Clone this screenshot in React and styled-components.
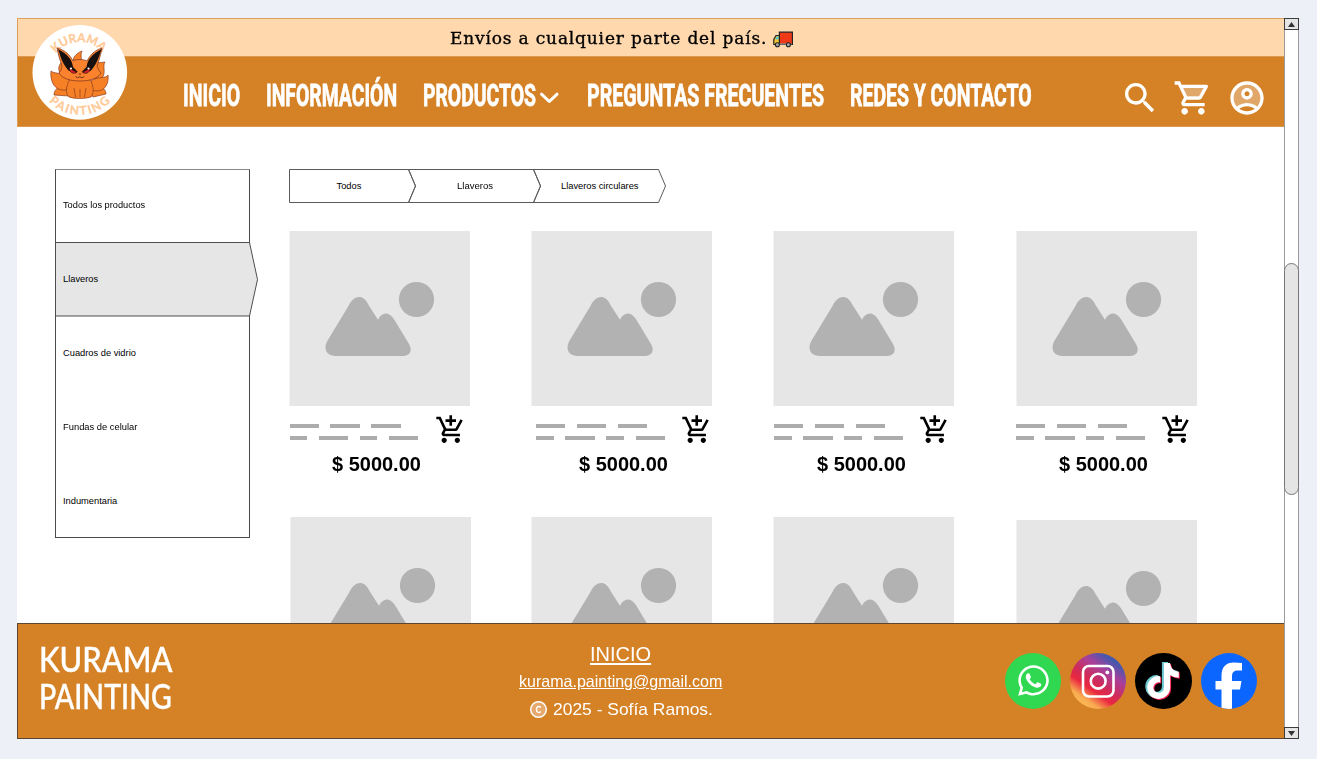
import React, { useLayoutEffect, useRef, useState } from "react";
import styled, { createGlobalStyle } from "styled-components";
import { FaWhatsapp, FaTiktok } from "react-icons/fa";

const GlobalStyle = createGlobalStyle`
  * { box-sizing: border-box; }
  body { margin: 0; background: #edf0f6; font-family: "Liberation Sans", Arial, sans-serif; color: #000; }
`;

const Page = styled.div`
  width: 1317px;
  height: 759px;
  padding: 18px 0 0 17px;
  overflow: hidden;
`;

const Frame = styled.div`
  display: flex;
  width: 1282px;
  height: 721px;
  background: #fff;
`;

const Main = styled.div`
  position: relative;
  display: flex;
  flex-direction: column;
  width: 1266.5px;
  height: 721px;
`;

/* Text stretched horizontally so that it fills a fixed width */
const FitBox = styled.span`
  display: block;
  flex: none;
  width: ${(p) => p.$w}px;
  white-space: nowrap;
`;
const FitInner = styled.span`
  display: inline-block;
  transform-origin: 0 50%;
`;
function Fit({ w, children, className }) {
  const ref = useRef(null);
  const [scale, setScale] = useState(1);
  useLayoutEffect(() => {
    setScale(w / ref.current.offsetWidth);
  }, [w]);
  return (
    <FitBox $w={w} className={className}>
      <FitInner ref={ref} style={{ transform: `scaleX(${scale})` }}>
        {children}
      </FitInner>
    </FitBox>
  );
}

/* ---------- header ---------- */
const Banner = styled.div`
  display: flex;
  align-items: center;
  gap: 5px;
  height: 38px;
  flex: none;
  padding: 3px 0 0 432px;
  background: #ffd8ae;
  border: solid #dda05a;
  border-width: 1px 0 0 1px;
`;
const BannerText = styled(Fit)`
  font: 500 16px/20px "DejaVu Serif", serif;
  letter-spacing: 0.8px;
  -webkit-text-stroke: 0.35px #000;
`;
const NavBar = styled.header`
  display: flex;
  align-items: flex-start;
  height: 71px;
  flex: none;
  padding-left: 165px;
  background: #d58227;
  border: solid #dc9a50;
  border-width: 1px 0 1px 1px;
`;
const Nav = styled.nav`
  display: flex;
  gap: 26px;
  padding-top: 20px;
  width: 937px;
`;
const NavItem = styled.div`
  display: flex;
  align-items: center;
  gap: 3px;
  height: 38px;
  svg { margin-top: 3px; }
`;
const NavText = styled(Fit)`
  font: 700 31.5px/38px Roboto, sans-serif;
  color: #fff;
  -webkit-text-stroke: 0.8px #fff;
`;
const Actions = styled.div`
  display: flex;
  gap: 13.4px;
  padding-top: 21px;
`;
const LogoSlot = styled.div`
  position: absolute;
  left: 13px;
  top: 4px;
  width: 100px;
  height: 100px;
`;

/* ---------- body ---------- */
const Content = styled.div`
  display: flex;
  align-items: flex-start;
  height: 496px;
  flex: none;
  overflow: hidden;
  padding: 42px 0 0 38px;
`;
const Sidebar = styled.ul`
  list-style: none;
  margin: 0 39px 0 0;
  padding: 0;
  width: 195px;
  height: 369px;
  flex: none;
  border: 1px solid #4a4a4a;
  border-top-color: #8a8a8a;
`;
const SideItem = styled.li`
  position: relative;
  display: flex;
  align-items: center;
  height: 73.8px;
  padding: 0 0 3px 7px;
`;
const ActiveShape = styled.svg`
  position: absolute;
  left: -1px;
  top: -1.8px;
  width: 204px;
  height: 76px;
`;
const SideText = styled(Fit)`
  position: relative;
  font-size: 9.3px;
  line-height: 12px;
`;
const Catalog = styled.section`
  width: 960px;
`;
const Crumbs = styled.div`
  display: flex;
  height: 34px;
  margin-bottom: 28px;
`;
const Crumb = styled.div`
  position: relative;
  display: flex;
  align-items: center;
  justify-content: center;
  width: 125px;
  height: 34px;
  flex: none;
  padding-right: ${(p) => p.$pad}px;
`;
const CrumbShape = styled.svg`
  position: absolute;
  left: 0;
  top: 0;
  width: 128px;
  height: 34px;
  overflow: visible;
`;
const CrumbText = styled(Fit)`
  position: relative;
  font-size: 9.3px;
  line-height: 12px;
`;
const Grid = styled.div`
  display: grid;
  grid-template-columns: 242px 242px 242px 181px;
  grid-auto-rows: 286px;
`;
const Card = styled.article`
  padding-top: ${(p) => p.$drop || 0}px;
  padding-left: ${(p) => p.$shift || 0}px;
`;
const Photo = styled.svg`
  display: block;
  width: 181px;
  height: 175px;
`;
const Info = styled.div`
  padding-left: ${(p) => p.$shift || 0}px;
`;
const InfoTop = styled.div`
  display: flex;
  height: 44px;
  padding-top: 8px;
`;
const Lines = styled.div`
  display: flex;
  flex-direction: column;
  gap: 8px;
  width: 145.5px;
  padding: 10px 0 0 0.5px;
`;
const Line = styled.div`
  display: flex;
  gap: 11.6px;
  height: 4px;
`;
const Dash = styled.i`
  width: ${(p) => p.$w}px;
  background: #acacac;
`;
const Price = styled(Fit)`
  margin: 2px 0 0 43px;
  font-weight: 700;
  font-size: 21px;
  line-height: 24px;
`;

/* ---------- footer ---------- */
const Footer = styled.footer`
  display: flex;
  height: 116px;
  flex: none;
  background: #d58227;
  border: 1px solid #5d4630;
  border-right: 0;
  color: #fff;
`;
const Brand = styled.div`
  width: 400px;
  padding: 16px 0 0 21px;
`;
const BrandText = styled(Fit)`
  font: 500 34.5px/38px Lato, sans-serif;
  height: 37px;
  -webkit-text-stroke: 0.4px #fff;
`;
const Contact = styled.div`
  display: flex;
  flex-direction: column;
  align-items: center;
  width: 405px;
  padding-top: 17px;
`;
const FooterText = styled.div`
  font-size: ${(p) => p.$size}px;
  line-height: ${(p) => p.$lh}px;
`;
const Copyright = styled.div`
  display: flex;
  align-items: center;
  gap: 5px;
  padding: 4px 0 0 1px;
`;
const Social = styled.div`
  display: flex;
  gap: 9px;
  padding: 28.5px 0 0 182px;
`;
const SocialIcon = styled.div`
  display: flex;
  align-items: center;
  justify-content: center;
  width: ${(p) => p.$size || 56.5}px;
  height: ${(p) => p.$size || 56.5}px;
  border-radius: 50%;
  overflow: hidden;
  background: ${(p) => p.$bg};
  svg { flex: none; }
`;
const TikTok = styled(FaTiktok)`
  color: #fff;
  filter: drop-shadow(-1.2px -1px 0 #6cc8d0) drop-shadow(1.3px 1px 0 #f0204e);
`;

/* ---------- scrollbar ---------- */
const ScrollTrack = styled.div`
  display: flex;
  flex-direction: column;
  width: 15px;
  height: 721px;
  background: #fff;
  border: solid #9a9a9a;
  border-width: 0 1px;
  flex: none;
`;
const ScrollButton = styled.div`
  display: flex;
  align-items: center;
  justify-content: center;
  width: 15px;
  height: 12px;
  flex: none;
  margin-left: -1px;
  background: #e5e5e5;
  border: 1px solid #3c3c3c;
`;
const Thumb = styled.div`
  width: 15px;
  height: 232px;
  flex: none;
  margin: 233px 0 232px -1px;
  border: 1px solid #777;
  border-radius: 8px;
  background: #e5e5e5;
`;

function Logo() {
  const tail = { fill: "#f58025", stroke: "#8b3b20", strokeWidth: 0.7 };
  return (
    <svg width="100" height="100" viewBox="0 0 100 100">
      <circle cx="49.8" cy="50.4" r="47.3" fill="#fff" />
      <defs>
        <path id="arcTop" d="M 19 50.500 A 30.500 30.500 0 0 1 80 50.500" />
        <path id="arcBottom" d="M 7.500 50.500 A 42.300 42.300 0 0 0 92.100 50.500" />
      </defs>
      <g fill="#ffcb98" stroke="#ffcb98" strokeWidth="0.300" fontFamily="Lato, sans-serif" fontWeight="700" fontSize="12">
        <text textAnchor="middle">
          <textPath href="#arcTop" startOffset="49%">KURAMA</textPath>
        </text>
        <text textAnchor="middle" letterSpacing="1.700">
          <textPath href="#arcBottom" startOffset="50.500%">PAINTING</textPath>
        </text>
      </g>
      <path d="M43 38c1-4 4-7 9-9-2 4 0 6-1 10z" {...tail} />
      <path d="M33 54c-6-4-5-11-1-14l6 12z" {...tail} />
      <path d="M63 43c3-3 7-2 12-3-3 4 2 12-4 17-5 2-9-1-8-5z" {...tail} />
      <path d="M36 62c-6 1-12 5-12 11l15 1 3-6z" {...tail} />
      <path d="M64 62c6 1 12 5 12 10l-13 3-4-6z" {...tail} />
      <path d="M21 49c4 4 16 0 19 9 2 8-3 11-8 10-9-1-12-11-11-19z" {...tail} />
      <path d="M78 53c-2 4-11 1-17 6-4 6 0 10 6 10 9 0 12-9 11-16z" {...tail} />
      <path d="M40 57h20c4 8 4 14 1 18-7 2-16 2-22 0-4-4-3-11 1-18z" {...tail} />
      <path d="M45.500 75l-1.500-9M54.500 75l1.500-9M50 75v-8" fill="none" stroke="#8d3b1c" strokeWidth="0.700" />
      <path d="M32 44c-2-6-4-12-5-18 8 2 13 7 16 13 4-2 10-2 14 0 3-6 8-11 15-13-1 6-3 12-5 18 1 2 1 4 4 7-3 5-10 8-21 8s-18-3-21-8c3-3 2-5 3-7z" fill="#fb832e" stroke="#7a3220" strokeWidth="0.700" />
      <path d="M28 27c9 5 14 10 15 18l5 5-9-1c-5-5-8-12-11-22z" fill="#18100f" />
      <path d="M71.500 27c-9 5-14 10-15 18l-5 5 9-1c5-5 8-12 11-22z" fill="#18100f" />
      <path d="M39 46l8 4.500c-3 1.500-7 1-8-4.500z" fill="#e31f28" stroke="#32100f" strokeWidth="0.700" />
      <path d="M60.500 46l-8 4.500c3 1.500 7 1 8-4.500z" fill="#e31f28" stroke="#32100f" strokeWidth="0.700" />
      <circle cx="41" cy="46.500" r="1.100" fill="#fff" />
      <circle cx="58.500" cy="46.500" r="1.100" fill="#fff" />
      <path d="M48.700 52h2.400M45.500 54.500q2 2.400 4.400.3q2.400 2.100 4.400-.3" fill="none" stroke="#501d16" strokeWidth="0.800" />
    </svg>
  );
}

function Truck() {
  return (
    <svg width="22" height="18" viewBox="0 0 22 18">
      <path d="M1.800 14.500V9.500L4 5.500H8v9z" fill="#f3c62f" stroke="#222" strokeWidth="1.200" />
      <path d="M3.200 9.300L4.800 6.500h1.800v2.800z" fill="#4cc8ec" />
      <path d="M7.400 2.200h13v12.300h-13z" fill="#f03a17" stroke="#222" strokeWidth="1.200" />
      <path d="M3 14h16.500" stroke="#888" strokeWidth="1.400" />
      <circle cx="5.400" cy="14.800" r="2" fill="#aaa" stroke="#222" strokeWidth="1.100" />
      <circle cx="16.400" cy="14.800" r="2" fill="#aaa" stroke="#222" strokeWidth="1.100" />
    </svg>
  );
}

const SearchIcon = () => (
  <svg width="40" height="40" viewBox="0 0 24 24" fill="#fff">
    <path d="M15.5 14h-.79l-.28-.27C15.41 12.59 16 11.11 16 9.5 16 5.91 13.09 3 9.5 3S3 5.91 3 9.5 5.91 16 9.5 16c1.61 0 3.09-.59 4.23-1.57l.27.28v.79l5 4.99L20.49 19l-4.99-5zm-6 0C7.01 14 5 11.99 5 9.5S7.01 5 9.5 5 14 7.01 14 9.5 11.99 14 9.5 14z" />
  </svg>
);
const CartIcon = () => (
  <svg width="40" height="40" viewBox="0 0 24 24" fill="#fff">
    <path d="M15.55 11l2.76-5H6.16l2.37 5z" opacity=".3" />
    <path d="M15.55 13c.75 0 1.41-.41 1.75-1.03l3.58-6.49A.996.996 0 0020.01 4H5.21l-.94-2H1v2h2l3.6 7.59-1.35 2.44C4.52 15.37 5.48 17 7 17h12v-2H7l1.1-2h7.45zM6.16 6h12.15l-2.76 5H8.53L6.16 6zM7 18c-1.1 0-1.99.9-1.99 2S5.9 22 7 22s2-.9 2-2-.9-2-2-2zm10 0c-1.1 0-1.99.9-1.99 2s.89 2 1.99 2 2-.9 2-2-.9-2-2-2z" />
  </svg>
);
const AccountIcon = () => (
  <svg width="40" height="40" viewBox="0 0 24 24" fill="#fff">
    <path opacity=".3" fillRule="evenodd" d="M12 4c-4.420 0-8 3.580-8 8 0 1.950.7 3.730 1.860 5.120C7.550 15.800 9.680 15 12 15s4.450.8 6.140 2.120C19.300 15.730 20 13.950 20 12c0-4.420-3.580-8-8-8zm0 9c-1.930 0-3.500-1.570-3.500-3.500S10.070 6 12 6s3.500 1.570 3.500 3.500S13.930 13 12 13z" />
    <path d="M12 2C6.480 2 2 6.480 2 12s4.480 10 10 10 10-4.480 10-10S17.520 2 12 2zM7.350 18.500C8.660 17.560 10.260 17 12 17s3.340.56 4.650 1.500c-1.310.94-2.910 1.500-4.650 1.500s-3.340-.56-4.650-1.500zm10.790-1.380C16.450 15.800 14.320 15 12 15s-4.450.8-6.140 2.120C4.700 15.730 4 13.950 4 12c0-4.420 3.580-8 8-8s8 3.580 8 8c0 1.950-.7 3.730-1.860 5.120z" />
    <path d="M12 6c-1.930 0-3.500 1.570-3.500 3.500S10.070 13 12 13s3.500-1.570 3.500-3.500S13.930 6 12 6zm0 5c-.83 0-1.500-.67-1.500-1.500S11.170 8 12 8s1.500.67 1.500 1.500S12.830 11 12 11z" />
  </svg>
);
const AddCartIcon = () => (
  <svg width="31.500" height="31.500" viewBox="0 0 24 24">
    <path d="M11 9h2V6h3V4h-3V1h-2v3H8v2h3v3zm-4 9c-1.1 0-1.99.9-1.99 2S5.9 22 7 22s2-.9 2-2-.9-2-2-2zm10 0c-1.1 0-1.99.9-1.99 2s.89 2 1.99 2 2-.9 2-2-.9-2-2-2zm-9.830-3.250l.03-.12.9-1.630h7.450c.75 0 1.410-.41 1.750-1.030l3.860-7.010L19.420 4h-.01l-1.100 2-2.760 5H8.530l-.13-.27L6.160 6l-.95-2-.94-2H1v2h2l3.600 7.590-1.350 2.450c-.16.28-.25.61-.25.96 0 1.100.9 2 2 2h12v-2H7.420c-.13 0-.25-.11-.25-.25z" />
  </svg>
);
const Chevron = () => (
  <svg width="22" height="14" viewBox="0 0 22 14">
    <path d="M2.500 3.200l7.800 7.300 7.800-7.300" fill="none" stroke="#fff" strokeWidth="3" strokeLinecap="round" strokeLinejoin="round" />
  </svg>
);
const InstagramGlyph = () => (
  <svg width="34" height="34" viewBox="0 0 34 34" fill="none" stroke="#fff" strokeWidth="2.600">
    <rect x="2" y="2" width="30.500" height="30.500" rx="6" />
    <circle cx="17.200" cy="17.200" r="7.400" />
    <circle cx="26.300" cy="8.400" r="1.900" fill="#fff" stroke="none" />
  </svg>
);

function Product({ shift, drop, infoShift, photoOnly }) {
  return (
    <Card $shift={shift} $drop={drop}>
      <Photo viewBox="0 0 181 175" fill="#b2b2b2">
        <rect x="0.500" width="180.500" height="175" fill="#e6e6e6" />
        <circle cx="127.500" cy="68.500" r="17.600" />
        <path d="M38.300 110L59.500 75C65 63.500 74.500 63 79.500 74L89 88.700C92.500 81.500 99.500 79.500 105.500 89L120 113C124 120 120.500 125 114 125H46.500C36.500 124.500 34.500 117 38.300 110z" />
      </Photo>
      {!photoOnly && (
        <Info $shift={infoShift}>
          <InfoTop>
            <Lines>
              <Line><Dash $w={29.400} /><Dash $w={29.400} /><Dash $w={29.400} /></Line>
              <Line><Dash $w={17.700} /><Dash $w={29.400} /><Dash $w={17.700} /><Dash $w={29.400} /></Line>
            </Lines>
            <AddCartIcon />
          </InfoTop>
          <Price w={88.500}>$ 5000.00</Price>
        </Info>
      )}
    </Card>
  );
}

const NAV = [
  ["INICIO", 57],
  ["INFORMACIÓN", 131],
  ["PRODUCTOS", 113, true],
  ["PREGUNTAS FRECUENTES", 237],
  ["REDES Y CONTACTO", 182],
];
const CATEGORIES = [
  ["Todos los productos", 82.500],
  ["Llaveros", 35],
  ["Cuadros de vidrio", 73],
  ["Fundas de celular", 74.500],
  ["Indumentaria", 54],
];
const CRUMBS = [
  ["Todos", 25, 5],
  ["Llaveros", 36, 4],
  ["Llaveros circulares", 78, 3],
];
const PRODUCTS = [
  {},
  { infoShift: 4.500 },
  { infoShift: 0.500 },
  { shift: 0.500 },
  { shift: 0.500, photoOnly: true },
  { photoOnly: true },
  { shift: -0.500, photoOnly: true },
  { shift: 1, drop: 3, photoOnly: true },
];

export default function App() {
  return (
    <Page>
      <GlobalStyle />
      <Frame>
        <Main>
          <Banner>
            <BannerText w={317}>Envíos a cualquier parte del país.</BannerText>
            <Truck />
          </Banner>
          <NavBar>
            <Nav>
              {NAV.map(([label, w, menu]) => (
                <NavItem key={label}>
                  <NavText w={w}>{label}</NavText>
                  {menu && <Chevron />}
                </NavItem>
              ))}
            </Nav>
            <Actions>
              <SearchIcon />
              <CartIcon />
              <AccountIcon />
            </Actions>
          </NavBar>
          <LogoSlot><Logo /></LogoSlot>
          <Content>
            <Sidebar>
              {CATEGORIES.map(([label, w], i) => (
                <SideItem key={label}>
                  {i === 1 && (
                    <ActiveShape viewBox="0 0 204 76">
                      <path d="M.5.5H194.500L202.500 37.500L194.500 74H.5z" fill="#e6e6e6" stroke="#4f4f4f" />
                    </ActiveShape>
                  )}
                  <SideText w={w}>{label}</SideText>
                </SideItem>
              ))}
            </Sidebar>
            <Catalog>
              <Crumbs>
                {CRUMBS.map(([label, w, pad], i) => (
                  <Crumb key={label} $pad={pad}>
                    <CrumbShape viewBox="0 0 128 34">
                      <path
                        d={i === 0 ? "M.5.5H119.500L126.500 17L119.500 33.500H.5z" : "M-5.500.5H119.500L126.500 17L119.500 33.500H-5.500L1.500 17z"}
                        fill="none"
                        stroke="#5a5a5a"
                      />
                    </CrumbShape>
                    <CrumbText w={w}>{label}</CrumbText>
                  </Crumb>
                ))}
              </Crumbs>
              <Grid>
                {PRODUCTS.map((p, i) => <Product key={i} {...p} />)}
              </Grid>
            </Catalog>
          </Content>
          <Footer>
            <Brand>
              <BrandText w={133}>KURAMA</BrandText>
              <BrandText w={133}>PAINTING</BrandText>
            </Brand>
            <Contact>
              <FooterText $size={21} $lh={25}><Fit w={61}><u>INICIO</u></Fit></FooterText>
              <FooterText $size={16.500} $lh={30}><Fit w={203}><u>kurama.painting@gmail.com</u></Fit></FooterText>
              <Copyright>
                <svg width="19" height="19" viewBox="0 0 19 19">
                  <circle cx="9.500" cy="8.500" r="7.800" fill="#e6a96b" stroke="#fff" strokeWidth="1.500" />
                  <path d="M11.800 6.600Q9.600 4.300 7.800 6.600Q6.900 8.500 7.800 10.400Q9.600 12.700 11.800 10.400" fill="none" stroke="#fff" strokeWidth="1.500" />
                </svg>
                <FooterText $size={17} $lh={20}><Fit w={160}>2025 - Sofía Ramos.</Fit></FooterText>
              </Copyright>
            </Contact>
            <Social>
              <SocialIcon $size={56} $bg="#30d852"><FaWhatsapp size={35} color="#fff" /></SocialIcon>
              <SocialIcon $size={56} $bg="linear-gradient(35deg, #fdc458 8%, #f9aa50 22%, #ea2840 36%, #d12a58 48%, #a8409a 66%, #4757ad 82%)"><InstagramGlyph /></SocialIcon>
              <SocialIcon $bg="#000"><TikTok size={36} /></SocialIcon>
              <SocialIcon $bg="#0b66ff">
                <svg width="57" height="57" viewBox="0 0 57 57">
                  <path d="M21.500 57V37.500H15.500V29H21.500V24Q21.500 10.500 34 10.500Q38 10.500 42 11V18.500H37.500Q32 18.500 32 24V29H41.500L40 37.500H32V57z" fill="#fff" />
                </svg>
              </SocialIcon>
            </Social>
          </Footer>
        </Main>
        <ScrollTrack>
          <ScrollButton>
            <svg width="7" height="5" viewBox="0 0 7 5"><path d="M3.500 0L7 5H0z" fill="#333" /></svg>
          </ScrollButton>
          <Thumb />
          <ScrollButton>
            <svg width="7" height="5" viewBox="0 0 7 5"><path d="M3.500 5L7 0H0z" fill="#333" /></svg>
          </ScrollButton>
        </ScrollTrack>
      </Frame>
    </Page>
  );
}
